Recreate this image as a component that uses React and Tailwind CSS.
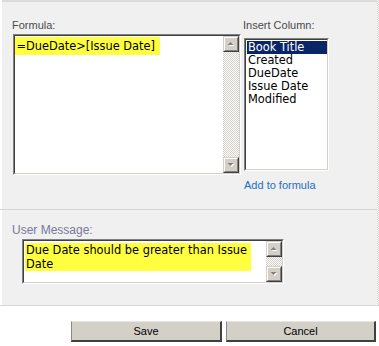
const hatch = 'bg-[repeating-conic-gradient(#d4d0c8_0_25%,#ffffff_0_50%)] bg-[length:2px_2px]';

const ScrollButton = ({ dir }) => (
  <div className="w-[16px] h-[16px] shrink-0 bg-[#d4d0c8] border border-t-[#d4d0c8] border-l-[#d4d0c8] border-r-[#404040] border-b-[#404040]">
    <div className="w-full h-full border border-t-white border-l-white border-r-[#808080] border-b-[#808080] flex items-center justify-center">
      <svg width="9" height="6" viewBox="0 0 9 6">
        {dir === 'up' ? (
          <>
            <polygon points="1.5,5 4.5,2 7.5,5" fill="#ffffff" />
            <polygon points="0.5,4 3.5,1 6.5,4" fill="#808080" />
          </>
        ) : (
          <>
            <polygon points="1.5,2 7.5,2 4.5,5" fill="#ffffff" />
            <polygon points="0.5,1 6.5,1 3.5,4" fill="#808080" />
          </>
        )}
      </svg>
    </div>
  </div>
);

const Scrollbar = () => (
  <div className="w-[16px] h-full flex flex-col shrink-0">
    <ScrollButton dir="up" />
    <div className={`flex-1 ${hatch}`} />
    <ScrollButton dir="down" />
  </div>
);

// classic 2px inset frame
const Inset = ({ className, children }) => (
  <div className={`border border-t-[#808080] border-l-[#808080] border-r-white border-b-white ${className}`}>
    <div className="w-full h-full border border-t-[#404040] border-l-[#404040] border-r-[#d4d0c8] border-b-[#d4d0c8] bg-white flex">
      {children}
    </div>
  </div>
);

const columns = ['Book Title', 'Created', 'DueDate', 'Issue Date', 'Modified'];

export default function App() {
  return (
    <div className="w-[379px] h-[346px] bg-white overflow-hidden font-['Liberation_Sans',Arial,sans-serif]">
      <div className="flex h-[305px]">
        <div className="w-[2px] bg-white" />
        <div className="flex-1 bg-[#f0f0f0] border-t-2 border-[#dcdcdc] flex flex-col">
          <div className="h-[207px] flex pt-[17px] pl-[10px]">
            <div className="flex flex-col">
              <div className="text-[11px] leading-[13px] text-[#4a4a4a] h-[13px]">Formula:</div>
              <Inset className="mt-[2px] ml-[1px] w-[228px] h-[141px]">
                <div className="flex-1 pt-[1px]">
                  <div className="w-[145px] h-[18px] bg-[#ffff40] pl-[1.5px] pt-[2px] font-['DejaVu_Sans',Verdana,sans-serif] text-[11.4px] leading-[14px] text-black whitespace-nowrap">
                    =DueDate&gt;[Issue Date]
                  </div>
                </div>
                <Scrollbar />
              </Inset>
            </div>
            <div className="flex flex-col ml-[2px]">
              <div className="text-[11px] leading-[13px] text-[#4a4a4a] h-[13px]">Insert Column:</div>
              <Inset className="mt-[6px] ml-[1px] w-[85px] h-[133px]">
                <div className="flex-1 pt-[1px] pl-[1px] font-['DejaVu_Sans',Verdana,sans-serif] text-[11.4px] leading-[13px]">
                  {columns.map((c, i) => (
                    <div
                      key={c}
                      className={`h-[13px] pl-[1px] whitespace-nowrap ${i === 0 ? 'bg-[#0a246a] text-white' : 'text-black'}`}
                    >
                      {c}
                    </div>
                  ))}
                </div>
              </Inset>
              <div className="mt-[8px] ml-[1px] text-[11px] leading-[13px] text-[#1f6fc0]">Add to formula</div>
            </div>
          </div>
          <div className="h-[1px] bg-[#d4d4d4] -ml-[2px]" />
          <div className="flex flex-col pt-[13px] pl-[10px]">
            <div className="text-[12px] leading-[14px] text-[#78789a]">User Message:</div>
            <Inset className="mt-[2px] ml-[10px] w-[262px] h-[45px]">
              <div className="flex-1 pt-[2px] pl-[1px]">
                <div className="w-[226px] bg-[#ffff40] pl-[1px] font-['DejaVu_Sans',Verdana,sans-serif] text-[11.4px] leading-[14px] text-black whitespace-nowrap">
                  Due Date should be greater than Issue
                  <br />
                  Date
                </div>
              </div>
              <Scrollbar />
            </Inset>
          </div>
        </div>
        <div className={`w-[2px] ${hatch}`} />
      </div>
      <div className="h-[1px] bg-[#d6d6d6]" />
      <div className="flex justify-end gap-[4px] pr-[3px] mt-[15px]">
        <button className="w-[151px] h-[21px] bg-[#d4d0c8] border-l border-t border-l-[#8a8a8a] border-t-[#e8e6e0] border-r-2 border-b-2 border-r-[#404040] border-b-[#404040] text-[11px] text-black leading-[17px]">
          Save
        </button>
        <button className="w-[150px] h-[21px] bg-[#d4d0c8] border-l border-t border-l-[#8a8a8a] border-t-[#e8e6e0] border-r-2 border-b-2 border-r-[#404040] border-b-[#404040] text-[11px] text-black leading-[17px]">
          Cancel
        </button>
      </div>
    </div>
  );
}
